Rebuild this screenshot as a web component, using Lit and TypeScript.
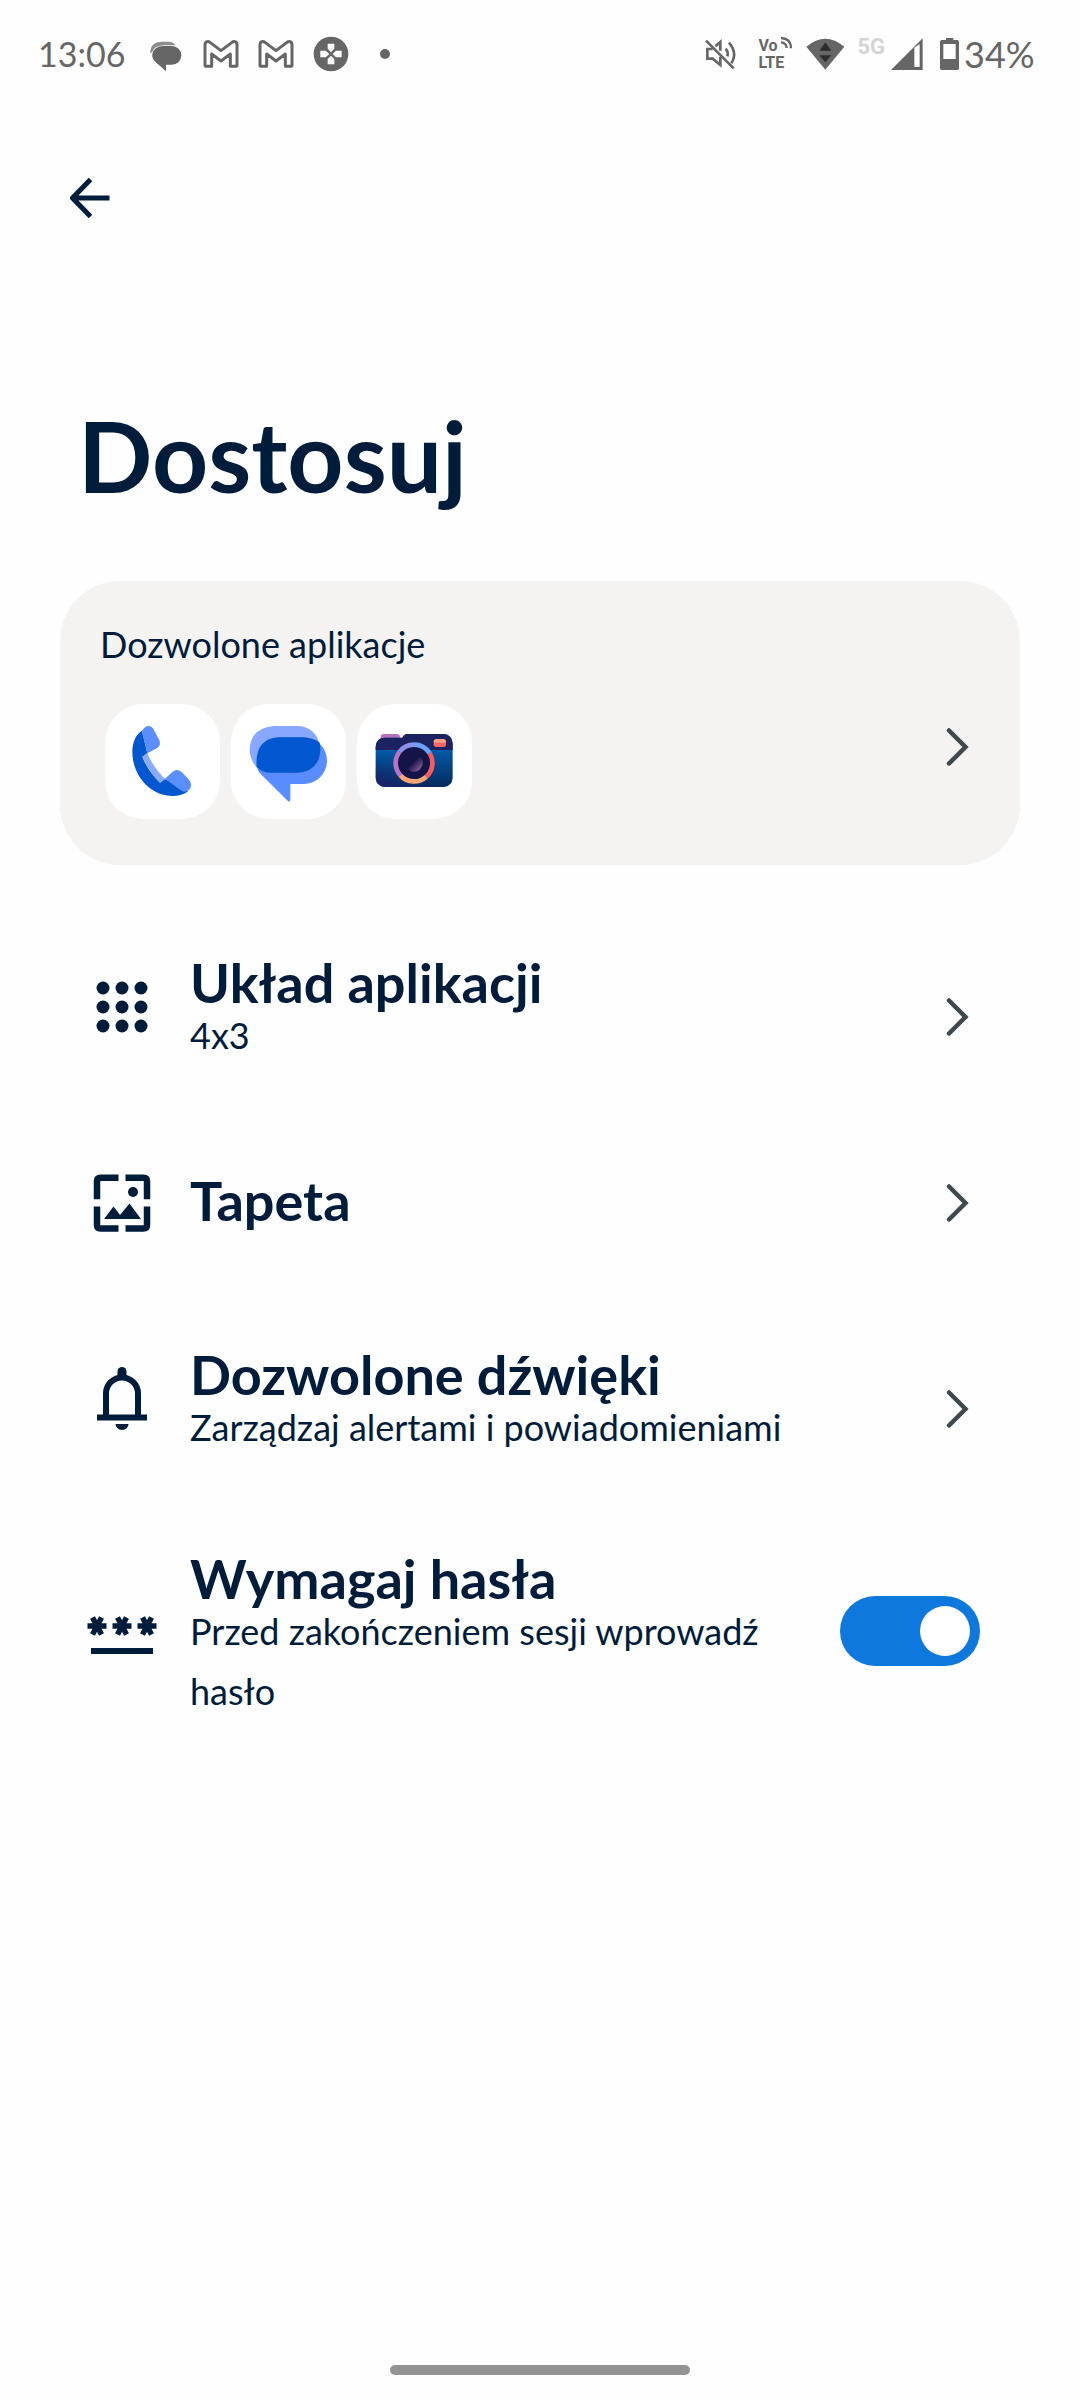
import { LitElement, html, css, svg, nothing } from "lit";
import type { TemplateResult } from "lit";
import { customElement, property, state } from "lit/decorators.js";

/* ---------- icons ---------- */

const arrowBack = html`<svg class="icon" viewBox="0 0 40 40" aria-hidden="true">
  <path d="M39.500 20H3M20.500 1.500 2.500 20l18 18.500" fill="none" stroke="currentColor" stroke-width="5" stroke-linejoin="miter"/>
</svg>`;

const chevron = html`<svg class="chevron" viewBox="0 0 44 44" aria-hidden="true">
  <path d="M13 5.500 29.500 22 13 38.500" fill="none" stroke="currentColor" stroke-width="4.500" stroke-linecap="round"/>
</svg>`;

const gridIcon = html`<svg class="glyph" viewBox="0 0 72 72" aria-hidden="true">
  ${[17, 36, 55].map((y) => [17, 36, 55].map((x) => svg`<circle cx=${x} cy=${y} r="6.500" fill="currentColor"/>`))}
</svg>`;

const wallpaperIcon = html`<svg class="glyph" viewBox="0 0 72 72" aria-hidden="true">
  <g fill="none" stroke="currentColor" stroke-width="6.500">
    <path d="M32.500 10.800H14.500q-3.500 0-3.500 3.500v18"/>
    <path d="M39.500 10.800H57.500q3.500 0 3.500 3.500v18"/>
    <path d="M11 39.500v18.500q0 3.500 3.500 3.500h18"/>
    <path d="M61 39.500v18.500q0 3.500-3.500 3.500h-18"/>
  </g>
  <circle cx="47" cy="25" r="5" fill="currentColor"/>
  <path d="M18 52 27.500 39.500 34 48 43.500 36.500 55 52Z" fill="currentColor"/>
</svg>`;

const bellIcon = html`<svg class="glyph" viewBox="0 0 72 72" aria-hidden="true">
  <path d="M11 54.500H61M20 54V30.500a16 16 0 0 1 32 0V54" fill="none" stroke="currentColor" stroke-width="6"/>
  <path d="M31.500 14V8.500a4.500 4.500 0 0 1 9 0V14Z" fill="currentColor"/>
  <path d="M29.500 61h13a6.500 6 0 0 1-13 0Z" fill="currentColor"/>
</svg>`;

const passwordIcon = html`<svg class="glyph" viewBox="0 2 72 72" aria-hidden="true">
  <g stroke="currentColor" stroke-width="5.500" fill="none">
    ${[11, 36, 61].map((x) => svg`<path d=${`M${x - 9.5} 31H${x + 9.5}M${x - 4.5} 22.500l9 17M${x + 4.5} 22.500l-9 17`}/>`)}
  </g>
  <path d="M5 56h62" stroke="currentColor" stroke-width="6"/>
</svg>`;

const phoneApp = html`<svg class="app" viewBox="0 0 345 345" role="img" aria-label="Telefon">
  <path d="M111 80C93 91 82 113 82 143C82 216 137 276 203 276C221 276 237 272 249 262L178 224L165 236C142 214 124 188 112 158L127 148Z" fill="#0157d0"/>
  <path d="M112 158L127 148C139 176 158 204 181 225L166 237C142 214 124 188 112 158Z" fill="#8aabff"/>
  <path d="M110 80L120 70Q135 60 145 74L163 109Q169 123 158 131L127 148Z" fill="#5b8eff"/>
  <path d="M180 224L203 203Q216 193 229 203L251 226Q266 244 251 259Q239 268 226 258Z" fill="#5b8eff"/>
</svg>`;

const messagesApp = html`<svg class="app" viewBox="0 0 345 345" role="img" aria-label="Wiadomości">
  <path d="M129 66H198Q252 66 268 125L78 192Q56 165 56 137Q58 72 129 66Z" fill="#88a8ff"/>
  <path d="M145 100H218A70 70 0 0 1 218 240H178V288Q177 296 170 290L86 207Q76 194 76 168Q78 104 145 100Z" fill="#588cff"/>
  <path d="M145 100H215Q244 101 266 116Q268 122 268 137Q265 202 200 206H120Q92 206 77 188Q72 103 145 100Z" fill="#0157d0"/>
</svg>`;

const cameraApp = html`<svg class="app" viewBox="0 0 345 345" role="img" aria-label="Aparat">
  <defs>
    <linearGradient id="body" x1="0" y1="0" x2="0" y2="1">
      <stop offset="0.200" stop-color="#0260b2"/><stop offset="1" stop-color="#042a5c"/>
    </linearGradient>
    <linearGradient id="side" x1="0" y1="1" x2="1" y2="0">
      <stop offset="0" stop-color="#23206c" stop-opacity=".9"/><stop offset=".4" stop-color="#23206c" stop-opacity="0"/>
    </linearGradient>
    <linearGradient id="flash" x1="0" y1="0" x2="0" y2="1">
      <stop offset=".35" stop-color="#ffa184"/><stop offset=".55" stop-color="#f96468"/>
    </linearGradient>
    <linearGradient id="glass" x1="0" y1="0" x2="1" y2="1">
      <stop offset=".45" stop-color="#131448"/><stop offset="1" stop-color="#b06aa8"/>
    </linearGradient>
  </defs>
  <path d="M71 104V98Q72 90 81 90H120Q128 90 129 100V104Z" fill="#b872bb"/>
  <path d="M56 138V128Q58 101 84 101H136Q142 90 150 90H260Q285 92 287 118V222Q285 247 260 249H84Q58 247 56 222Z" fill="url(#body)"/>
  <path d="M56 138H287V222Q285 247 260 249H84Q58 247 56 222Z" fill="url(#side)"/>
  <path d="M56 138V128Q58 101 84 101H136Q142 90 150 90H260Q285 92 287 118V138Z" fill="#1c2361"/>
  <rect x="230" y="105" width="37" height="24" rx="8" fill="url(#flash)"/>
  <circle cx="171" cy="177" r="49" fill="#131448"/>
  <g fill="none" stroke-width="14">
    <path d="M171 122A55 55 0 0 1 218 148" stroke="#6ba2f8"/>
    <path d="M218 148A55 55 0 0 1 208 218" stroke="#fb5a5e"/>
    <path d="M208 218A55 55 0 0 1 130 214" stroke="#fda574"/>
    <path d="M130 214A55 55 0 0 1 128 143" stroke="#b873c4"/>
    <path d="M128 143A55 55 0 0 1 171 122" stroke="#8d8fe8"/>
  </g>
  <circle cx="171" cy="177" r="26" fill="url(#glass)"/>
</svg>`;

const chatStatus = html`<svg class="status-icon" viewBox="0 0 108 108" aria-hidden="true">
  <path d="M7 52Q6 17 42 17H62Q76 18 83 28H48Q20 28 11 50Z" fill="currentColor" opacity=".75"/>
  <path d="M46 30H72A27 27 0 0 1 72 86H54V106L20 76Q11 66 13 54Q18 31 46 30Z" fill="currentColor"/>
</svg>`;

const mailStatus = html`<svg class="status-icon" viewBox="0 0 108 108" aria-hidden="true">
  <path d="M6 26C6 15 16 15 22 20L54 44L86 20C92 15 102 15 102 26V86Q102 91 97 91H82V54L54 75L26 54V91H11Q6 91 6 86Z" fill="none" stroke="currentColor" stroke-width="9" stroke-linejoin="round"/>
</svg>`;

const gameStatus = html`<svg class="status-icon" viewBox="0 0 108 108" aria-hidden="true">
  <circle cx="54" cy="54" r="52" fill="currentColor"/>
  <path d="M44 23H64V38L54 49L44 38ZM44 85H64V69L54 59L44 69ZM22 44H38L49 54L38 64H22ZM86 44H69L59 54L69 64H86Z" fill="#fefefe"/>
</svg>`;

const muteStatus = html`<svg class="mute" viewBox="0 0 96 96" aria-hidden="true">
  <g fill="none" stroke="currentColor" stroke-width="8">
    <path d="M6 8 89 91"/>
    <path d="M26 33H10V62H26L49 81V56M34 25 49 12V38"/>
    <path d="M65 32Q74 43 70 55M75 14Q102 46 82 76"/>
  </g>
</svg>`;

const waves = html`<svg class="waves" viewBox="0 0 36 36" aria-hidden="true">
  <path d="M3 3Q33 4 33 34M3 16Q19 17 20 33" fill="none" stroke="currentColor" stroke-width="7"/>
</svg>`;

const wifiStatus = html`<svg class="wifi" viewBox="0 0 117 96" aria-hidden="true">
  <path d="M1 26Q58-22 115 26L58 95Z" fill="currentColor"/>
  <path d="M40 38 58 13 76 38ZM40 52H76L58 73Z" fill="#2d2d2d"/>
</svg>`;

const signalStatus = html`<svg class="signal" viewBox="0 0 96 96" aria-hidden="true">
  <path d="M0 96 95 1V96ZM70 29V87H86V18Z" fill="currentColor" fill-rule="evenodd"/>
</svg>`;

const batteryStatus = html`<svg class="battery" viewBox="0 0 57 96" aria-hidden="true">
  <path d="M5 6H18V0H40V6H52Q57 6 57 11V91Q57 96 52 96H5Q0 96 0 91V11Q0 6 5 6ZM10 18V63H47V18Z" fill="currentColor" fill-rule="evenodd"/>
</svg>`;

/* ---------- status bar ---------- */

@customElement("status-bar")
export class StatusBar extends LitElement {
  static styles = css`
    :host {
      display: flex;
      justify-content: space-between;
      align-items: center;
      height: 108px;
      padding: 0 42px 0 38px;
      color: #666;
      font-size: 34px;
      line-height: 40px;
    }
    .group { display: flex; align-items: center; }
    .notices { gap: 19px; }
    .time { min-width: 91px; }
    .status-icon { width: 36px; height: 36px; }
    .dot { width: 10px; height: 10px; margin-left: 12px; border-radius: 50%; background: currentColor; }
    .system { gap: 12px; }
    .mute { width: 32px; height: 32px; margin-right: 10px; }
    .volte { display: grid; width: 36px; font-family: Roboto, sans-serif; font-size: 16px; line-height: 17px; font-weight: 700; }
    .vo { display: flex; gap: 2px; }
    .waves { width: 12px; height: 12px; }
    .wifi { width: 39px; height: 32px; }
    .net { align-self: flex-start; font-family: Roboto, sans-serif; font-size: 22px; line-height: 18px; font-weight: 700; color: #d4d4d4; }
    .cell { display: flex; gap: 6px; }
    .signal { width: 32px; height: 32px; }
    .power { display: flex; align-items: center; gap: 5px; margin-left: 5px; }
    .level { min-width: 74px; font-size: 36px; }
    .battery { width: 19px; height: 32px; }
  `;

  render() {
    return html`
      <div class="group notices">
        <span class="time">13:06</span>
        ${chatStatus}${mailStatus}${mailStatus}${gameStatus}
        <span class="dot"></span>
      </div>
      <div class="group system">
        ${muteStatus}
        <span class="volte"><span class="vo">Vo${waves}</span><span>LTE</span></span>
        ${wifiStatus}
        <span class="cell"><span class="net">5G</span>${signalStatus}</span>
        <span class="power">${batteryStatus}<span class="level">34%</span></span>
      </div>
    `;
  }
}

/* ---------- settings row ---------- */

@customElement("setting-row")
export class SettingRow extends LitElement {
  @property({ attribute: false }) icon: TemplateResult | typeof nothing = nothing;
  @property() heading = "";
  @property() detail = "";
  @property({ type: Boolean }) toggle = false;
  @property({ type: Boolean }) checked = false;

  static styles = css`
    :host { display: block; }
    .row {
      display: flex;
      align-items: center;
      gap: 32px;
      box-sizing: border-box;
      width: 100%;
      min-height: 188px;
      margin: 0;
      padding: 48px 100px 48px 86px;
      border: 0;
      background: none;
      color: inherit;
      font: inherit;
      text-align: left;
      cursor: pointer;
    }
    .single { padding-top: 40px; padding-bottom: 56px; }
    .glyph { flex: none; width: 72px; height: 72px; }
    .row:not(.single) .glyph { margin-bottom: 16px; }
    .text { flex: 1; min-width: 0; display: grid; padding-bottom: 4px; }
    .heading { font-size: 54px; line-height: 44px; font-weight: 700; }
    .detail { font-size: 36px; line-height: 60px; }
    .chevron { flex: none; width: 44px; height: 44px; color: #3f484c; }
    .row:not(.single) .chevron { margin-top: 4px; }
    .switch {
      appearance: none;
      flex: none;
      display: flex;
      align-items: center;
      box-sizing: border-box;
      width: 140px;
      height: 70px;
      margin: 0 0 20px;
      padding: 10px;
      border-radius: 35px;
      background: #8f979c;
      cursor: pointer;
    }
    .switch::before { content: ""; width: 50px; height: 50px; border-radius: 50%; background: #fff; }
    .switch:checked { justify-content: flex-end; background: #0f78dd; }
  `;

  private onToggle(event: Event) {
    this.checked = (event.target as HTMLInputElement).checked;
  }

  render() {
    const text = html`<span class="text">
      <span class="heading">${this.heading}</span>
      ${this.detail ? html`<span class="detail">${this.detail}</span>` : nothing}
    </span>`;
    if (this.toggle) {
      return html`<label class="row">
        ${this.icon}${text}
        <input class="switch" type="checkbox" role="switch" .checked=${this.checked} @change=${this.onToggle}>
      </label>`;
    }
    return html`<button type="button" class="row ${this.detail ? "" : "single"}">${this.icon}${text}${chevron}</button>`;
  }
}

/* ---------- page ---------- */

@customElement("app-root")
export class AppRoot extends LitElement {
  @state() private requirePassword = true;

  static styles = css`
    :host {
      display: flex;
      flex-direction: column;
      min-height: 100vh;
      background: #fefefe;
      color: #001c3b;
      font-family: Lato, "Open Sans", sans-serif;
    }
    .back {
      display: flex;
      align-self: flex-start;
      margin: 50px 0 0 50px;
      padding: 20px;
      border: 0;
      background: none;
      color: inherit;
      cursor: pointer;
    }
    .icon { width: 40px; height: 40px; }
    .title { margin: 157px 78px 0; font-size: 98px; line-height: 120px; font-weight: 700; }
    .allowed {
      display: flex;
      align-items: center;
      justify-content: space-between;
      margin: 66px 60px 48px;
      padding: 33px 40px 46px;
      border: 0;
      border-radius: 60px;
      background: #f4f3f1;
      color: inherit;
      font: inherit;
      text-align: left;
      cursor: pointer;
    }
    .content { display: grid; gap: 30px; }
    .label { font-size: 36px; line-height: 60px; }
    .apps { display: flex; gap: 11px; padding-left: 5px; }
    .app { width: 115px; height: 115px; border-radius: 38px; background: #fff; }
    .chevron { width: 44px; height: 44px; margin-top: 60px; color: #3f484c; }
    .handle { width: 300px; height: 10px; margin: auto auto 25px; border-radius: 5px; background: #949494; }
  `;

  render() {
    return html`
      <status-bar></status-bar>
      <button class="back" type="button" aria-label="Wstecz">${arrowBack}</button>
      <h1 class="title">Dostosuj</h1>
      <button class="allowed" type="button">
        <span class="content">
          <span class="label">Dozwolone aplikacje</span>
          <span class="apps">${phoneApp}${messagesApp}${cameraApp}</span>
        </span>
        ${chevron}
      </button>
      <setting-row .icon=${gridIcon} heading="Układ aplikacji" detail="4x3"></setting-row>
      <setting-row .icon=${wallpaperIcon} heading="Tapeta"></setting-row>
      <setting-row .icon=${bellIcon} heading="Dozwolone dźwięki" detail="Zarządzaj alertami i powiadomieniami"></setting-row>
      <setting-row .icon=${passwordIcon} heading="Wymagaj hasła" detail="Przed zakończeniem sesji wprowadź hasło" toggle .checked=${this.requirePassword}></setting-row>
      <div class="handle"></div>
    `;
  }
}
